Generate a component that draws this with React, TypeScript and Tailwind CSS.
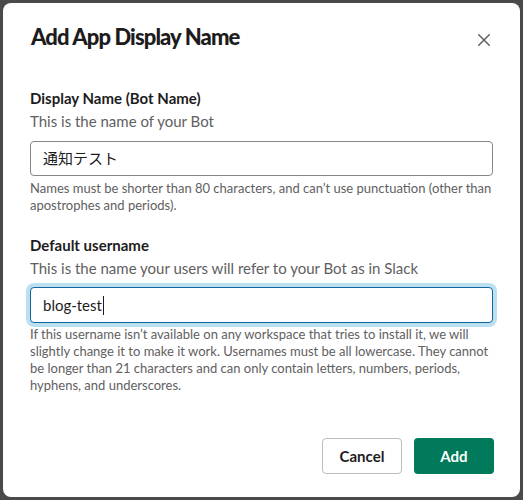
import React from 'react';

const font = { fontFamily: 'Lato, "Noto Sans CJK JP", sans-serif' };

const fieldCls =
  'flex items-center h-[35px] rounded-[4px] border bg-white pl-[12px] text-[15px] text-[#1d1c1d]';

function CloseIcon() {
  return (
    <svg width="12" height="12" viewBox="0 0 12 12" fill="none">
      <path d="M0.75 0.75L11.25 11.25M11.25 0.75L0.75 11.25" stroke="#616061" strokeWidth="1.5" strokeLinecap="round" />
    </svg>
  );
}

export default function App() {
  return (
    <div className="w-[523px] h-[500px] overflow-hidden bg-[#4a4a4a] pt-[3px] pl-[3px]" style={font}>
      <div className="w-[517px] h-[494px] rounded-[8px] bg-white flex flex-col">
        {/* Header */}
        <header className="flex items-start justify-between pt-[19px] pl-[28px] pr-[18px]">
          <h1 className="text-[22px] leading-[30px] font-black tracking-[-0.9px] text-[#1d1c1d]">
            Add App Display Name
          </h1>
          <button className="h-[36px] w-[36px] flex items-center justify-center rounded-[4px]">
            <CloseIcon />
          </button>
        </header>

        {/* Body */}
        <div className="flex-1 pt-[29px] pl-[27px] pr-[27px]">
          <section className="mb-[20px]">
            <label className="block text-[15px] leading-[22px] font-bold text-[#1d1c1d]">
              Display Name (Bot Name)
            </label>
            <p className="mt-[1px] text-[15px] leading-[22px] text-[#616061]">This is the name of your Bot</p>
            <div className={`mt-[9px] border-[#868686] ${fieldCls}`}>通知テスト</div>
            <p className="mt-[4px] text-[13px] leading-[17px] text-[#616061]">
              Names must be shorter than 80 characters, and can’t use punctuation (other than apostrophes and periods).
            </p>
          </section>

          <section>
            <label className="block text-[15px] leading-[22px] font-bold text-[#1d1c1d]">Default username</label>
            <p className="mt-[1px] text-[15px] leading-[22px] text-[#616061]">
              This is the name your users will refer to your Bot as in Slack
            </p>
            <div
              className={`mt-[8px] h-[36px] border-[#1264a3] shadow-[0_0_0_4px_rgba(29,155,209,0.3)] ${fieldCls}`}
            >
              blog-test
              <span className="ml-[1px] inline-block h-[19px] w-[1px] bg-[#1d1c1d]" />
            </div>
            <p className="mt-[3px] text-[13px] leading-[17px] text-[#616061]">
              If this username isn’t available on any workspace that tries to install it, we will slightly change it
              to make it work. Usernames must be all lowercase. They cannot be longer than 21 characters and can only
              contain letters, numbers, periods, hyphens, and underscores.
            </p>
          </section>
        </div>

        {/* Footer */}
        <footer className="flex justify-end gap-[12px] pr-[26px] pb-[23px]">
          <button className="h-[36px] min-w-[80px] px-[12px] rounded-[4px] border border-[#bcbcbc] bg-white text-[15px] font-bold text-[#1d1c1d]">
            Cancel
          </button>
          <button className="h-[36px] min-w-[80px] px-[12px] rounded-[4px] bg-[#007a5a] text-[15px] font-bold text-white">
            Add
          </button>
        </footer>
      </div>
    </div>
  );
}
